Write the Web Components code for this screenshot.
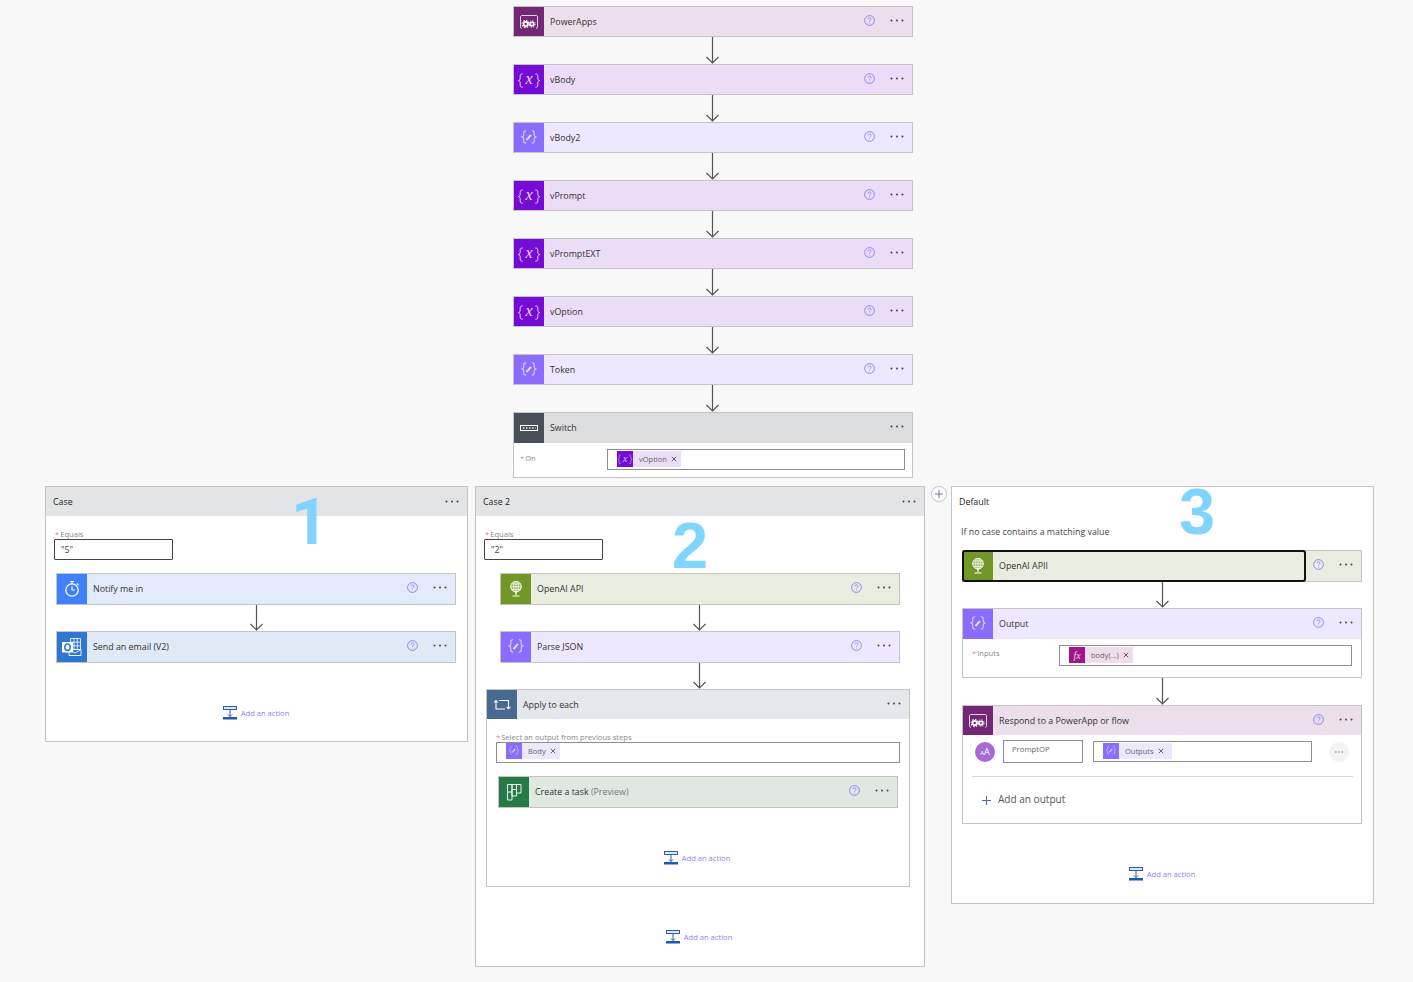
<!doctype html>
<html>
<head>
<meta charset="utf-8">
<title>Flow</title>
<style>
	html, body {
		margin: 0;
		background: #f8f8f8;
		font: 8.85px "Open Sans", "Noto Sans", sans-serif;
		color: #333;
	}
	.page {
		padding-top: 6px;
		height: 976px;
		overflow: hidden;
	}
	.top {
		display: flex;
		flex-direction: column;
		align-items: center;
		margin-left: 13px;
		--head: 29px;
	}
	.cases {
		display: flex;
		align-items: flex-start;
		padding-left: 45px;
		margin-top: 8px;
	}
	.muted { color: #777; }
</style>
</head>
<body>
<div class="page">
	<div class="top">
		<flow-card tone="powerapps"><span slot="title">PowerApps</span></flow-card>
		<flow-arrow h="27"></flow-arrow>
		<flow-card tone="variable"><span slot="title">vBody</span></flow-card>
		<flow-arrow h="27"></flow-arrow>
		<flow-card tone="compose"><span slot="title">vBody2</span></flow-card>
		<flow-arrow h="27"></flow-arrow>
		<flow-card tone="variable"><span slot="title">vPrompt</span></flow-card>
		<flow-arrow h="27"></flow-arrow>
		<flow-card tone="variable"><span slot="title">vPromptEXT</span></flow-card>
		<flow-arrow h="27"></flow-arrow>
		<flow-card tone="variable"><span slot="title">vOption</span></flow-card>
		<flow-arrow h="27"></flow-arrow>
		<flow-card tone="compose"><span slot="title">Token</span></flow-card>
		<flow-arrow h="27"></flow-arrow>
		<flow-card tone="switch" nohelp style="--head:30px">
			<span slot="title">Switch</span>
			<field-row label="On" style="padding:6px 7px 7px 6px;--label-line:18px">
				<field-input><token-chip tone="variable">vOption</token-chip></field-input>
			</field-row>
		</flow-card>
	</div>

	<div class="cases">
		<flow-scope name="Case" style="width:423px;--nudge:1px">
			<big-number style="left:245px;top:5px;font-family:Roboto,sans-serif">1</big-number>
			<case-equals value="&quot;5&quot;"></case-equals>
			<flow-card tone="timer"><span slot="title">Notify me in</span></flow-card>
			<flow-arrow h="26" style="margin-left:2px"></flow-arrow>
			<flow-card tone="outlook"><span slot="title">Send an email (V2)</span></flow-card>
			<add-action style="padding-bottom:21px"></add-action>
		</flow-scope>

		<div style="width:7px"></div>

		<flow-scope name="Case 2" style="width:450px">
			<big-number style="left:196px;top:29px">2</big-number>
			<case-equals value="&quot;2&quot;"></case-equals>
			<flow-card tone="http"><span slot="title">OpenAI API</span></flow-card>
			<flow-arrow h="26"></flow-arrow>
			<flow-card tone="compose"><span slot="title">Parse JSON</span></flow-card>
			<flow-arrow h="26"></flow-arrow>
			<flow-card tone="loop" nohelp style="width:424px;align-self:flex-start;margin-left:10px;--head:29px">
				<span slot="title">Apply to each</span>
				<field-stack label="Select an output from previous steps">
					<field-input flush><token-chip tone="compose">Body</token-chip></field-input>
				</field-stack>
				<flow-card tone="planner" style="margin-left:11px;--head:30px"><span slot="title">Create a task <span class="muted">(Preview)</span></span></flow-card>
				<add-action style="padding-bottom:21px;margin-right:2px"></add-action>
			</flow-card>
			<add-action style="margin-right:2px"></add-action>
		</flow-scope>

		<add-branch></add-branch>

		<flow-scope name="Default" plain style="width:423px;--nudge:1px">
			<big-number style="left:227px;top:-5px">3</big-number>
			<scope-note>If no case contains a matching value</scope-note>
			<flow-card tone="http" selected><span slot="title">OpenAI APII</span></flow-card>
			<flow-arrow h="26" style="margin-left:2px"></flow-arrow>
			<flow-card tone="compose">
				<span slot="title">Output</span>
				<field-row label="Inputs" style="padding:6px 9px 11px 9px">
					<field-input><token-chip tone="expression">body(...)</token-chip></field-input>
				</field-row>
			</flow-card>
			<flow-arrow h="27" style="margin-left:2px"></flow-arrow>
			<flow-card tone="powerapps" style="--head:29px">
				<span slot="title">Respond to a PowerApp or flow</span>
				<output-row name="PromptOP">
					<token-chip tone="compose" style="padding-right:8px">Outputs</token-chip>
				</output-row>
				<add-output></add-output>
			</flow-card>
			<add-action></add-action>
		</flow-scope>
	</div>
</div>

<script>
const variableIcon = `<path d="M8.700 9c-2 0-2.500.7-2.500 2.200v2c0 1.200-.5 2-1.900 2.400 1.400.4 1.900 1.200 1.900 2.400v2c0 1.500.5 2.200 2.500 2.200M21.300 9c2 0 2.500.7 2.500 2.200v2c0 1.200.5 2 1.900 2.400-1.400.4-1.900 1.200-1.900 2.400v2c0 1.500-.5 2.200-2.500 2.200" fill="none" stroke="#fff" stroke-opacity=".9" stroke-width=".9"/>
	<text x="15" y="19" text-anchor="middle" fill="#fff" fill-opacity=".85" font-family="Liberation Serif" font-style="italic" font-size="16">x</text>`

const composeIcon = `<g transform="translate(15 14) scale(1.100 .95) translate(-15 -15)">
	<path d="M12.500 8.500c-1.600 0-2.200.6-2.200 2v2.300c0 1-.5 1.700-1.600 2.200 1.100.5 1.600 1.200 1.600 2.200v2.300c0 1.400.6 2 2.200 2M17.500 8.500c1.600 0 2.200.6 2.200 2v2.300c0 1 .5 1.700 1.600 2.200-1.100.5-1.600 1.200-1.600 2.200v2.300c0 1.400-.6 2-2.200 2" fill="none" stroke="#fff" stroke-opacity=".7"/>
	<path d="M12.800 18.200l3.900-5.400" stroke="#fff" stroke-opacity=".8" stroke-width="1.900"/>
</g>`

const ICONS = {
	powerapps: `<path d="M8 21.500c-1-.2-1.500-.8-1.500-1.800v-9.700c0-1 .5-1.500 1.500-1.500h14c1 0 1.500.5 1.500 1.500v9.700c0 1-.5 1.600-1.500 1.800" fill="none" stroke="#fff" stroke-opacity=".8"/>
		<circle cx="11.700" cy="17" r="3" fill="#fff"/>
		<circle cx="11.700" cy="17" r="3.600" fill="none" stroke="#fff" stroke-width="1.100" stroke-dasharray="1.500 1.300"/>
		<circle cx="11.700" cy="17" r="1.200" fill="#742774"/>
		<circle cx="18" cy="17" r="2.600" fill="#fff"/>
		<circle cx="18" cy="17" r="3.200" fill="none" stroke="#fff" stroke-width="1" stroke-dasharray="1.300 1.200"/>
		<circle cx="18" cy="17" r="1" fill="#742774"/>`,
	variable: variableIcon,
	compose: composeIcon,
	switch: `<rect x="6.500" y="12.500" width="17" height="5" fill="none" stroke="#fff"/>
		<path d="M9 15h1.500M12 15h1.500M15 15h1.500M18 15h1.500M21 15h.6" stroke="#fff" stroke-opacity=".85" stroke-width="1.500"/>`,
	timer: `<circle cx="15" cy="16" r="6.200" fill="none" stroke="#fff" stroke-width="1.300"/>
		<path d="M15 16v-3.500M15 16h3M13 7.500h4M15 7.500v2.300M20 9.500l1.600 1.500" fill="none" stroke="#fff" stroke-width="1.200"/>`,
	outlook: `<path d="M13.500 6.500h10v11h-10zM17 6.500v11M20.300 6.500v11M13.500 10.200h10M13.500 13.800h10" fill="none" stroke="#fff" stroke-opacity=".9" stroke-width=".9"/>
		<path d="M12 17.500h12v6h-12zM12 17.500l6 3.500 6-3.500" fill="#2f76d1" stroke="#fff" stroke-width=".9"/>
		<rect x="5" y="10" width="11" height="10.500" fill="#fff"/>
		<ellipse cx="10.500" cy="15.200" rx="2.700" ry="3.200" fill="none" stroke="#2f76d1" stroke-width="1.500"/>`,
	http: `<circle cx="15" cy="12.700" r="5.300" fill="#fff" fill-opacity=".25" stroke="#fff" stroke-width="1"/>
		<path d="M15 7.400v10.600M9.700 12.700h10.600M10.500 10h9M10.500 15.400h9" stroke="#fff" stroke-width=".7"/>
		<ellipse cx="15" cy="12.700" rx="2.400" ry="5.300" fill="none" stroke="#fff" stroke-width=".7"/>
		<path d="M15 18v3M11.500 22h7" stroke="#fff" stroke-width="1.200"/>`,
	loop: `<path d="M12 10.500h9.500v8M19.700 16.800l1.800 2 1.800-2M18 19H9v-8M7.200 12.500L9 10.500l1.800 2" fill="none" stroke="#fff" stroke-width="1.100"/>`,
	planner: `<path d="M8.500 7.500h4.500v15.500H8.500zM8.500 15h4.500M13 7.500h4.500v11.500H13zM13 12.500h4.500M17.500 7.500h4.500v8.500h-4.500z" fill="none" stroke="#fff" stroke-width=".9"/>`,
	expression: `<text x="15" y="20.500" text-anchor="middle" fill="#fff" font-family="Liberation Serif" font-style="italic" font-size="15">fx</text>`
}

const TONES = {
	powerapps: {icon: '#742774', head: '#ebdfeb'},
	variable: {icon: '#770bd6', head: '#ebdcf7'},
	compose: {icon: '#8c6cff', head: '#ede8fe'},
	switch: {icon: '#484f58', head: '#dcddde'},
	timer: {icon: '#4080fa', head: '#e2eafc'},
	outlook: {icon: '#2f76d1', head: '#deeaf6'},
	http: {icon: '#709727', head: '#e9eddf'},
	loop: {icon: '#486991', head: '#e4e7ec'},
	planner: {icon: '#267a45', head: '#dfe9e1'},
	expression: {icon: '#a0168a', head: '#f1dcec'}
}

const helpIcon = `<svg width="11" height="11" viewBox="0 0 11 11"><circle cx="5.500" cy="5.500" r="4.900" fill="none" stroke="#8f86ff"/><path d="M4 4.300c0-1 .7-1.500 1.500-1.500s1.500.6 1.500 1.400c0 1.100-1.500 1.200-1.500 2.400M5.500 7.700v.8" fill="none" stroke="#8f86ff" stroke-width=".9"/></svg>`

const dotsIcon = `<svg width="14" height="3" viewBox="0 0 14 3"><circle cx="1.500" cy="1.500" r="1" fill="#444"/><circle cx="7" cy="1.500" r="1" fill="#444"/><circle cx="12.500" cy="1.500" r="1" fill="#444"/></svg>`

class BaseElement extends HTMLElement {
	constructor() {
		super()
		this.attachShadow({mode:'open'})
	}

	connectedCallback() {
		this.shadowRoot.innerHTML = this.render()
	}
}

class FlowCard extends BaseElement {
	render() {
		const tone = TONES[this.getAttribute('tone')]
		const icon = ICONS[this.getAttribute('tone')]
		return /*html*/`
		<style>
			:host {
				display: block;
				width: 400px;
				box-sizing: border-box;
				border: 1px solid #c4c4c4;
				background: #fff;
				flex: none;
			}
			.head {
				display: flex;
				height: var(--head, 30px);
				background: ${tone.head};
			}
			.main {
				flex: 1;
				display: flex;
				align-items: center;
				min-width: 0;
			}
			.icon {
				width: 30px;
				align-self: stretch;
				display: flex;
				align-items: center;
				background: ${tone.icon};
			}
			.title {
				padding-left: 6px;
				color: #333;
			}
			.tools {
				width: 56px;
				flex: none;
				box-sizing: border-box;
				display: flex;
				align-items: center;
				justify-content: flex-end;
				gap: 15px;
				padding: 0 8px 3px 0;
			}
			:host([selected]) .main {
				outline: 2px solid #111;
				outline-offset: -1px;
				border-radius: 2px;
			}
		</style>
		<div class="head">
			<div class="main">
				<div class="icon"><svg width="30" height="30" viewBox="0 0 30 30">${icon}</svg></div>
				<div class="title"><slot name="title"></slot></div>
			</div>
			<div class="tools">${this.hasAttribute('nohelp') ? '' : helpIcon}${dotsIcon}</div>
		</div>
		<slot></slot>`
	}
}

class FlowScope extends BaseElement {
	render() {
		const plain = this.hasAttribute('plain')
		return /*html*/`
		<style>
			:host {
				display: block;
				position: relative;
				box-sizing: border-box;
				border: 1px solid #c4c4c4;
				background: #fff;
				flex: none;
			}
			.head {
				display: flex;
				align-items: center;
				justify-content: space-between;
				height: 29px;
				padding: 0 8px 0 7px;
				background: ${plain ? '#fff' : '#e3e4e6'};
				color: #222;
			}
			.dots {
				padding-bottom: 3px;
				display: ${plain ? 'none' : 'block'};
			}
			.body {
				display: flex;
				flex-direction: column;
				align-items: center;
				padding-right: var(--nudge, 0);
			}
		</style>
		<div class="head"><span>${this.getAttribute('name')}</span><span class="dots">${dotsIcon}</span></div>
		<div class="body"><slot></slot></div>`
	}
}

class FlowArrow extends BaseElement {
	render() {
		const h = Number(this.getAttribute('h'))
		return /*html*/`
		<style>
			:host { display: block; height: ${h}px; flex: none; }
			svg { display: block; }
		</style>
		<svg width="14" height="${h}" viewBox="0 0 14 ${h}">
			<path d="M6.500 0V${h - 0.5}M.5 ${h - 7}l6 6 6-6" fill="none" stroke="#555" stroke-width="1.200"/>
		</svg>`
	}
}

class AddAction extends BaseElement {
	render() {
		return /*html*/`
		<style>
			:host {
				display: flex;
				justify-content: center;
				align-items: center;
				gap: 4px;
				height: 14px;
				margin-top: 43px;
				padding-bottom: 22px;
				color: #8f7cff;
				font-size: 7.600px;
			}
			svg { display: block; }
			span { padding-bottom: 1px; }
		</style>
		<svg width="14" height="14" viewBox="0 0 14 14">
			<rect x=".5" y=".5" width="13" height="3" fill="#dfe7f5" stroke="#2b5cad"/>
			<path d="M7 3.500v7M5 8.500l2 2 2-2" fill="none" stroke="#2b5cad"/>
			<rect x="0" y="11" width="14" height="2.500" fill="#2258ab"/>
		</svg>
		<span>Add an action</span>`
	}
}

class FieldInput extends BaseElement {
	render() {
		return /*html*/`
		<style>
			:host {
				display: flex;
				align-items: flex-start;
				box-sizing: border-box;
				height: 21px;
				padding: ${this.hasAttribute('flush') ? '0' : '1px'} 0 0 9px;
				border: 1px solid #8e8e8e;
				background: #fff;
				flex: 1;
				min-width: 0;
			}
		</style>
		<slot></slot>`
	}
}

class TokenChip extends BaseElement {
	render() {
		const name = this.getAttribute('tone')
		const tone = TONES[name]
		return /*html*/`
		<style>
			:host {
				display: inline-flex;
				align-items: center;
				height: 16px;
				background: ${tone.head};
				color: #666;
				font-size: 7.500px;
				padding-right: 4px;
			}
			.icon {
				width: 16px;
				height: 16px;
				background: ${tone.icon};
				margin-right: 6px;
			}
			.text { padding-bottom: 1px; }
			.x { margin-left: 4px; }
			svg { display: block; }
		</style>
		<div class="icon"><svg width="16" height="16" viewBox="3 3 24 24" opacity=".8">${ICONS[name]}</svg></div>
		<span class="text"><slot></slot></span>
		<svg class="x" width="6" height="6" viewBox="0 0 6 6"><path d="M.8.8l4.400 4.400M5.200.8L.8 5.200" stroke="#555" stroke-width=".9"/></svg>`
	}
}

const labelStyle = `.star { color: #e9817f; margin-right: 1px; } .label { color: #888; font-size: 7.600px; }`

class FieldRow extends BaseElement {
	render() {
		return /*html*/`
		<style>
			:host { display: flex; }
			${labelStyle}
			.label { width: 87px; flex: none; line-height: var(--label-line, 17px); }
		</style>
		<div class="label"><span class="star">*</span>${this.getAttribute('label')}</div>
		<slot></slot>`
	}
}

class FieldStack extends BaseElement {
	render() {
		return /*html*/`
		<style>
			:host { display: block; margin: 14px 9px 13px; }
			${labelStyle}
			.label { height: 9px; line-height: 9px; white-space: nowrap; }
		</style>
		<div class="label"><span class="star">*</span>${this.getAttribute('label')}</div>
		<slot></slot>`
	}
}

class CaseEquals extends BaseElement {
	render() {
		return /*html*/`
		<style>
			:host { display: block; align-self: flex-start; margin: 14px 0 13px 8px; }
			${labelStyle}
			.label { height: 9px; line-height: 9px; padding-left: 1px; }
			.box {
				box-sizing: border-box;
				width: 119px;
				height: 21px;
				line-height: 20px;
				padding-left: 6px;
				border: 1px solid #444;
				border-radius: 1px;
				color: #444;
			}
		</style>
		<div class="label"><span class="star">*</span>Equals</div>
		<div class="box">${this.getAttribute('value')}</div>`
	}
}

class ScopeNote extends BaseElement {
	render() {
		return /*html*/`
		<style>
			:host {
				display: block;
				align-self: flex-start;
				margin: 10px 0 12px 9px;
				line-height: 12px;
				color: #444;
			}
		</style>
		<slot></slot>`
	}
}

class OutputRow extends BaseElement {
	render() {
		return /*html*/`
		<style>
			:host {
				display: flex;
				align-items: center;
				height: 23px;
				padding: 5px 0 0 12px;
			}
			.avatar {
				width: 20px;
				height: 20px;
				border-radius: 50%;
				background: #a56ad3;
				color: #fff;
				display: flex;
				align-items: center;
				justify-content: center;
				font-size: 9px;
				line-height: 1;
				margin-right: 8px;
			}
			.avatar small { font-size: 6px; margin-top: 2px; }
			.key {
				box-sizing: border-box;
				width: 80px;
				height: 23px;
				padding: 3px 0 0 8px;
				border: 1px solid #8e8e8e;
				font-size: 7.700px;
				color: #666;
				margin-right: 10px;
			}
			.value {
				display: flex;
				flex: none;
				width: 219px;
			}
			.more {
				width: 20px;
				height: 20px;
				border-radius: 50%;
				background: #f3f3f3;
				margin-left: 17px;
				display: flex;
				align-items: center;
				justify-content: center;
			}
		</style>
		<div class="avatar"><small>A</small>A</div>
		<div class="key">${this.getAttribute('name')}</div>
		<div class="value"><field-input><slot></slot></field-input></div>
		<div class="more"><svg width="8" height="2" viewBox="0 0 8 2"><path d="M0 1h1.500M3.200 1h1.500M6.500 1H8" stroke="#777"/></svg></div>`
	}
}

class AddOutput extends BaseElement {
	render() {
		return /*html*/`
		<style>
			:host {
				display: flex;
				align-items: center;
				height: 46px;
				margin: 13px 8px 0 9px;
				padding-left: 10px;
				border-top: 1px solid #d9d9d9;
				gap: 7px;
				font-size: 10.050px;
				color: #555;
			}
			span { padding-bottom: 2px; }
		</style>
		<svg width="9" height="9" viewBox="0 0 9 9"><path d="M4.500 0v9M0 4.500h9" stroke="#3f6fd8"/></svg>
		<span>Add an output</span>`
	}
}

class AddBranch extends BaseElement {
	render() {
		return /*html*/`
		<style>
			:host { display: block; width: 26px; flex: none; }
			svg { display: block; margin-left: 6px; }
		</style>
		<svg width="16" height="16" viewBox="0 0 16 16">
			<circle cx="8" cy="8" r="7.500" fill="#fff" stroke="#c4c4c4"/>
			<path d="M8 4v8M4 8h8" stroke="#6d7a94"/>
		</svg>`
	}
}

class BigNumber extends BaseElement {
	render() {
		return /*html*/`
		<style>
			:host {
				position: absolute;
				z-index: 2;
				font: bold 65px/60px "Liberation Sans", sans-serif;
				color: #80d4ff;
			}
		</style>
		<slot></slot>`
	}
}

customElements.define('flow-card', FlowCard)
customElements.define('flow-scope', FlowScope)
customElements.define('flow-arrow', FlowArrow)
customElements.define('add-action', AddAction)
customElements.define('field-input', FieldInput)
customElements.define('token-chip', TokenChip)
customElements.define('field-row', FieldRow)
customElements.define('field-stack', FieldStack)
customElements.define('case-equals', CaseEquals)
customElements.define('scope-note', ScopeNote)
customElements.define('output-row', OutputRow)
customElements.define('add-output', AddOutput)
customElements.define('add-branch', AddBranch)
customElements.define('big-number', BigNumber)
</script>
</body>
</html>
